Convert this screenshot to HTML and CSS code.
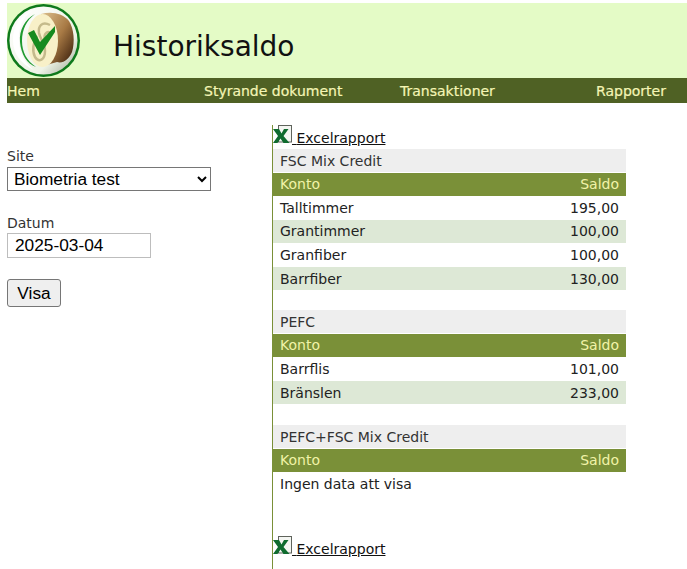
FILE: index.html
```html
<!DOCTYPE html>
<html lang="sv">
<head>
<meta charset="utf-8">
<title>Historiksaldo</title>
<link rel="stylesheet" href="styles.css">
</head>
<body>
<header class="banner">
  <svg class="logo" viewBox="0 0 74 74" width="74" height="74" aria-hidden="true">
    <defs>
      <linearGradient id="glass" x1="0" y1="0" x2="1" y2="1">
        <stop offset="0" stop-color="#ffffff"/>
        <stop offset="0.7" stop-color="#eef3e6"/>
        <stop offset="1" stop-color="#9aa392"/>
      </linearGradient>
      <linearGradient id="bark" x1="0" y1="0" x2="1" y2="1">
        <stop offset="0" stop-color="#dcc08e"/>
        <stop offset="0.5" stop-color="#a87a45"/>
        <stop offset="1" stop-color="#2e1405"/>
      </linearGradient>
    </defs>
    <circle cx="36.500" cy="36.500" r="36.500" fill="#0f7a1c"/>
    <circle cx="36.500" cy="36.500" r="34" fill="url(#glass)"/>
    <path d="M25 7C15 14 11 25 12 38C13 50 18 59 27 66C14 60 6 50 6 36C6 22 13 11 25 7Z" fill="#ffffff"/>
    <path d="M28 10C20 16 15 25 15 37C15 48 20 57 29 63C20 60 14 50 13 38C12 26 18 15 28 10Z" fill="#1f9a30"/>
    <path d="M34 10C44 7 56 9 62 17C67 25 68 38 65 48C62 55 56 60 50 58L36 62Z" fill="url(#bark)"/>
    <ellipse cx="35.500" cy="36.500" rx="15.500" ry="26.500" fill="#f8f0c8"/>
    <path d="M43 21C35 17 31 22 32 29C33 35 38 39 38 47C38 56 32 59 28 53C25 47 26 38 30 32M45 30C41 26 36 29 38 36" fill="none" stroke="#c5ba8c" stroke-width="2.500"/>
    <path d="M21 29L27 26L33 38L48 22L48 28L33 51Z" fill="#178a1f"/>
  </svg>
  <h1 class="title">Historiksaldo</h1>
</header>
<nav class="menu">
  <a href="#">Hem</a>
  <a href="#">Styrande dokument</a>
  <a href="#">Transaktioner</a>
  <a href="#">Rapporter</a>
</nav>
<main class="page">
  <aside class="filters">
    <label class="field-label" for="site">Site</label>
    <select id="site" class="site-select"><option>Biometria test</option></select>
    <label class="field-label date-label" for="datum">Datum</label>
    <input id="datum" class="date-input" type="text" value="2025-03-04">
    <button class="show-button" type="button">Visa</button>
  </aside>
  <section class="report">
    <a class="excel" href="#"><svg class="excel-icon" viewBox="0 0 19 19" width="19" height="19" aria-hidden="true"><rect x="5.500" y="0.500" width="13" height="16.500" fill="#f4f6f2" stroke="#5f635c"/><path d="M0 4H6L8.500 8.500L11 4H15.500L10.500 11L16.500 18H10.500L7.500 13.500L4.500 18H0L5 11Z" fill="#0f6b2e"/></svg> <span>Excelrapport</span></a>
    <table class="saldo">
      <caption>FSC Mix Credit</caption>
      <thead><tr><th>Konto</th><th class="num">Saldo</th></tr></thead>
      <tbody>
        <tr><td>Talltimmer</td><td class="num">195,00</td></tr>
        <tr class="alt"><td>Grantimmer</td><td class="num">100,00</td></tr>
        <tr><td>Granfiber</td><td class="num">100,00</td></tr>
        <tr class="alt"><td>Barrfiber</td><td class="num">130,00</td></tr>
      </tbody>
    </table>
    <table class="saldo saldo-wide-gap">
      <caption>PEFC</caption>
      <thead><tr><th>Konto</th><th class="num">Saldo</th></tr></thead>
      <tbody>
        <tr><td>Barrflis</td><td class="num">101,00</td></tr>
        <tr class="alt"><td>Bränslen</td><td class="num">233,00</td></tr>
      </tbody>
    </table>
    <table class="saldo">
      <caption>PEFC+FSC Mix Credit</caption>
      <thead><tr><th>Konto</th><th class="num">Saldo</th></tr></thead>
      <tbody>
        <tr><td colspan="2">Ingen data att visa</td></tr>
      </tbody>
    </table>
    <a class="excel excel-bottom" href="#"><svg class="excel-icon" viewBox="0 0 19 19" width="19" height="19" aria-hidden="true"><rect x="5.500" y="0.500" width="13" height="16.500" fill="#f4f6f2" stroke="#5f635c"/><path d="M0 4H6L8.500 8.500L11 4H15.500L10.500 11L16.500 18H10.500L7.500 13.500L4.500 18H0L5 11Z" fill="#0f6b2e"/></svg> <span>Excelrapport</span></a>
  </section>
</main>
</body>
</html>
```

FILE: styles.css
```css
* { box-sizing: border-box; }
html, body { margin: 0; height: 100%; overflow: hidden; }
body {
  padding: 3px 0 0 7px;
  display: flex;
  flex-direction: column;
  background: #fff;
  color: #222;
  font-family: "DejaVu Sans", sans-serif;
  font-size: 14px;
}
.banner {
  height: 75px;
  flex: none;
  display: flex;
  align-items: center;
  background: #e4fbc6;
}
.logo { flex: none; margin-right: 32px; }
.title {
  margin: 12px 0 0;
  font-size: 28px;
  font-weight: 400;
  color: #111;
}
.menu {
  height: 25px;
  flex: none;
  display: grid;
  grid-template-columns: 197px 196px 196px 1fr;
  align-items: center;
  background: #4f6124;
}
.menu a {
  color: #f4f5b5;
  text-decoration: none;
  -webkit-text-stroke: 0.2px #f4f5b5;
}
.page { flex: 1; display: flex; min-height: 0; padding-top: 22px; }
.filters { width: 265px; flex: none; display: flex; flex-direction: column; align-items: flex-start; padding-top: 23px; }
.field-label { line-height: 16px; color: #333; margin-bottom: 3px; }
.date-label { margin-top: 24px; margin-bottom: 2px; }
.site-select {
  width: 204px;
  height: 24px;
  font-family: "Liberation Sans", sans-serif;
  font-size: 17.300px;
  color: #000;
  background: #fff;
  border: 1px solid #767676;
  border-radius: 0;
  padding: 0 2px;
}
.date-input {
  width: 144px;
  height: 25px;
  font-family: "Liberation Sans", sans-serif;
  font-size: 17.300px;
  color: #000;
  border: 1px solid #bdbdbd;
  padding: 0 7px;
}
.show-button {
  margin-top: 21px;
  width: 54px;
  height: 28px;
  font-family: "Liberation Sans", sans-serif;
  font-size: 17.300px;
  color: #000;
  background: #efefef;
  border: 1px solid #767676;
  border-radius: 3px;
  padding: 0;
}
.report { width: 354px; flex: none; border-left: 1px solid #7a9038; }
.excel { display: block; height: 24px; line-height: 25px; color: #111; text-decoration: underline; white-space: nowrap; }
.excel-icon { vertical-align: -1px; }
.excel-bottom { margin-top: 40px; }
.saldo { width: 353px; border-collapse: collapse; margin-bottom: 20px; }
.saldo-wide-gap { margin-bottom: 21px; }
.saldo caption {
  height: 23px;
  line-height: 24px;
  padding: 0 7px;
  text-align: left;
  background: #eeeeee;
  color: #333;
  caption-side: top;
}
.saldo th, .saldo td { height: 23.500px; padding: 0 7px; text-align: left; font-weight: 400; border-top: 1px solid #fff; }
.saldo th { background: #7a9038; color: #f1f3a8; }
.saldo .num { text-align: right; }
.saldo .alt td { background: #dde8d6; }
```
